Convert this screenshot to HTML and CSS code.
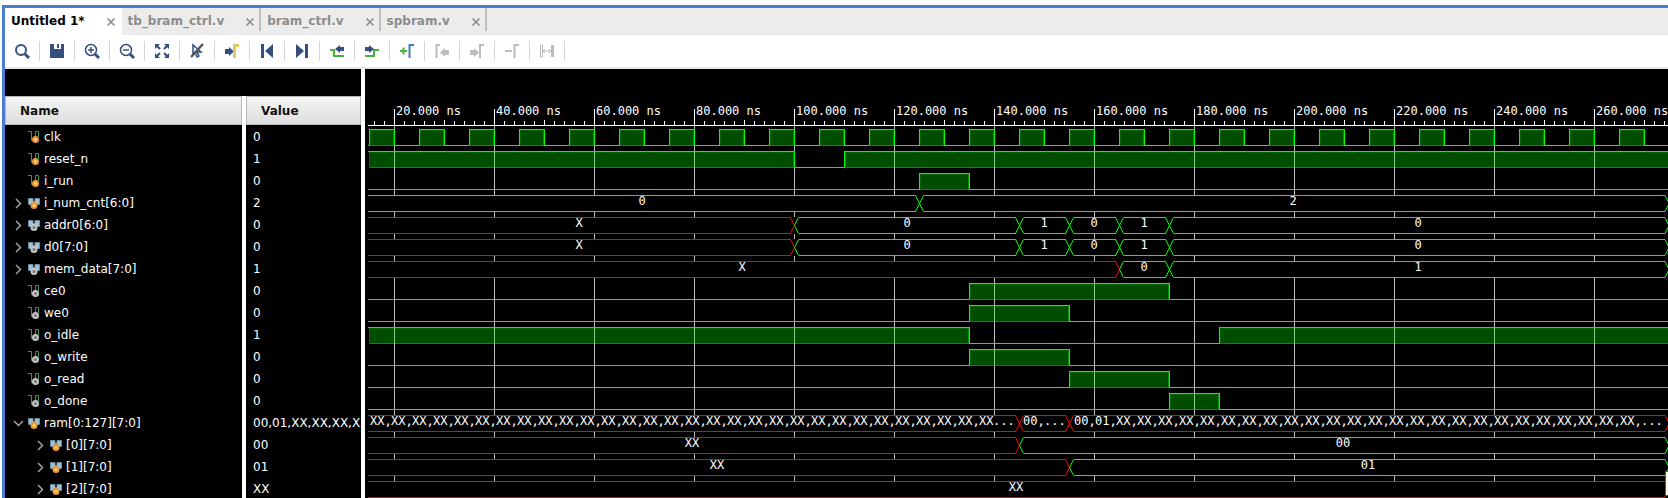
FILE: index.html
```html
<!DOCTYPE html>
<html lang="en">
<head>
<meta charset="utf-8">
<title>Waveform viewer</title>
<link rel="stylesheet" href="styles.css">
</head>
<body>
<svg class="defs" aria-hidden="true">
  <symbol id="net" viewBox="0 0 12 12">
    <path d="M0 .5H3.500V9.500H7.500V.5H10.500V6" fill="none" stroke="#3b9a50"/>
  </symbol>
  <symbol id="bus" viewBox="0 0 12 12">
    <path d="M.5 1.500H5V7.500H.5zM7 1.500h4.500v6H7z" fill="#9cc3d8" stroke="#6d8c9c"/>
    <path d="M4 3l2 2 2-2v4H4z" fill="#9cc3d8"/>
  </symbol>
  <symbol id="close" viewBox="0 0 8 8"><path d="M.5.5l7 7M7.500.5l-7 7" stroke="#8a8a8a" stroke-width="1.500"/></symbol>
</svg>
<main class="window">
  <nav class="tabs">
    <div class="tab active"><button class="label">Untitled 1*</button><button class="close" aria-label="Close Untitled 1"><svg><use href="#close"/></svg></button></div>
    <div class="tab"><button class="label">tb_bram_ctrl.v</button><button class="close" aria-label="Close tb_bram_ctrl.v"><svg><use href="#close"/></svg></button></div>
    <div class="tab"><button class="label">bram_ctrl.v</button><button class="close" aria-label="Close bram_ctrl.v"><svg><use href="#close"/></svg></button></div>
    <div class="tab"><button class="label">spbram.v</button><button class="close" aria-label="Close spbram.v"><svg><use href="#close"/></svg></button></div>
  </nav>
  <div class="toolbar">
    <button aria-label="Find"><svg viewBox="0 0 16 16"><circle cx="7" cy="7" r="5" class="l2"/><path d="M11 11l4 4" class="l3"/></svg></button>
    <button aria-label="Save"><svg viewBox="0 0 16 16"><path d="M1 1h4v5h7V1h3v14H1z" class="f"/><path d="M8 1h2v4H8z" class="f"/></svg></button>
    <button aria-label="Zoom in"><svg viewBox="0 0 16 16"><circle cx="7" cy="7" r="5.500" class="l1"/><path d="M11 11l4 4" class="l3"/><path d="M4 7h6M7 4v6" class="l1"/></svg></button>
    <button aria-label="Zoom out"><svg viewBox="0 0 16 16"><circle cx="7" cy="7" r="5.500" class="l1"/><path d="M11 11l4 4" class="l3"/><path d="M4 7h6" class="l1"/></svg></button>
    <button aria-label="Zoom fit"><svg viewBox="0 0 16 16"><path d="M1 1h5L1 6zM15 1v5l-5-5zM1 15v-5l5 5zM15 15h-5l5-5z" class="f"/><path d="M3 3l3 3M13 3l-3 3M3 13l3-3M13 13l-3-3" class="l2"/></svg></button>
    <button aria-label="Cancel selection"><svg viewBox="0 0 16 16"><path d="M4 2v9l2-2 2 5 2-1-2-4h4z" fill="none" stroke="#344f80" stroke-width="1.500"/><path d="M2 14L14 1" stroke="#555" stroke-width="2.500"/></svg></button>
    <button aria-label="Go to cursor"><svg viewBox="0 0 16 16"><path d="M1 6h4V4l5 4.500L5 13v-2H1z" class="f"/><path d="M10.500 15V2.500H15" fill="none" stroke="#e3c866" stroke-width="3"/></svg></button>
    <button aria-label="Go to start"><svg viewBox="0 0 16 16"><path d="M2 1h3v14H2zM14 1v14L6 8z" class="f"/></svg></button>
    <button aria-label="Go to end"><svg viewBox="0 0 16 16"><path d="M11 1h3v14h-3zM2 1v14l8-7z" class="f"/></svg></button>
    <button aria-label="Previous transition"><svg viewBox="0 0 16 16"><path d="M1 7h4v6h10" fill="none" stroke="#45b63b" stroke-width="2"/><path d="M15 4h-4V2L6 6l5 4V8h4z" class="f"/></svg></button>
    <button aria-label="Next transition"><svg viewBox="0 0 16 16"><path d="M1 13h9V7h5" fill="none" stroke="#45b63b" stroke-width="2"/><path d="M1 4h4V2l5 4-5 4V8H1z" class="f"/></svg></button>
    <button aria-label="Add marker"><svg viewBox="0 0 16 16"><path d="M1 8h7M4.500 4.500v7" stroke="#45b63b" stroke-width="2"/><path d="M10.500 15V2H15" fill="none" stroke="#3c83b5" stroke-width="2"/></svg></button>
    <button aria-label="Previous marker" disabled><svg viewBox="0 0 16 16"><path d="M2.500 15V2H6" fill="none" stroke="#bdbdbd" stroke-width="2"/><path d="M15 7h-4V5L6 9.500l5 4.500v-2h4z" fill="#bdbdbd"/></svg></button>
    <button aria-label="Next marker" disabled><svg viewBox="0 0 16 16"><path d="M11 15V2h4" fill="none" stroke="#bdbdbd" stroke-width="2"/><path d="M1 7h4V5l5 4.500L5 14v-2H1z" fill="#bdbdbd"/></svg></button>
    <button aria-label="Delete marker" disabled><svg viewBox="0 0 16 16"><path d="M1 8h7M10.500 15V2H15" fill="none" stroke="#bdbdbd" stroke-width="2"/></svg></button>
    <button aria-label="Swap markers" disabled><svg viewBox="0 0 16 16"><path d="M1.500 2h2v12h-2zM4 8h8M6 6L4 8l2 2M10 6l2 2-2 2" fill="none" stroke="#bdbdbd"/><path d="M12 2h3v12h-3z" fill="#bdbdbd"/></svg></button>
  </div>
  <div class="viewer">
    <section class="signals">
      <table>
        <colgroup><col class="col-name"><col class="col-value"></colgroup>
        <thead><tr><th scope="col">Name</th><th scope="col">Value</th></tr></thead>
        <tbody id="rows"></tbody>
      </table>
    </section>
    <section class="waves" id="waves"></section>
  </div>
  <div class="hint"></div>
</main>
<script src="script.js"></script>
</body>
</html>
```

FILE: styles.css
```css
* { box-sizing: border-box; }
body {
  margin: 0;
  height: 100vh;
  padding: 5px 0 0 2px;
  background: #fff;
  overflow: hidden;
  font: 12px/20px "DejaVu Sans", sans-serif;
}
button { border: 0; padding: 0; background: none; font: inherit; color: inherit; }
svg { display: block; }
.defs { position: absolute; width: 0; height: 0; }

.window {
  position: relative;
  display: flex;
  flex-direction: column;
  height: 100%;
  border: solid #4a7ccf;
  border-width: 3px 0 0 3px;
  overflow: hidden;
}

.tabs { display: flex; flex: none; height: 27px; background: #ececec; font-weight: bold; color: #8c8c8c; }
.tab { position: relative; display: flex; align-items: center; gap: 22px; padding: 0 7px 2px 6px; }
.tab:not(.active)::after {
  content: "";
  position: absolute;
  top: 0;
  right: 0;
  width: 2px;
  height: 23px;
  background: #bfbfbf;
}
.tab.active { background: #fff; color: #000; }
.close { padding-top: 3px; }
.close svg { width: 8px; height: 8px; }

.toolbar { display: flex; flex: none; align-items: center; height: 34px; border-bottom: 2px solid #e6e6e6; }
.toolbar button { display: flex; justify-content: center; align-items: center; width: 35px; height: 20px; border-right: 1px solid #d6d6d6; }
.toolbar svg { width: 16px; height: 16px; }
.f { fill: #344f80; }
.l1 { fill: none; stroke: #344f80; stroke-width: 1.5; }
.l2 { fill: none; stroke: #344f80; stroke-width: 2; }
.l3 { fill: none; stroke: #344f80; stroke-width: 3; }

.viewer { display: flex; flex: 1; min-height: 0; background: #000; color: #fff; }
.signals { flex: none; width: 360px; padding-top: 27px; border-right: 4px solid #fff; overflow: hidden; }
table { width: 356px; table-layout: fixed; border-spacing: 0; }
.col-name { width: 241px; }
td { padding: 2px 0 0; height: 22px; }
th:first-child, td:first-child { border-right: 4px solid #fff; }
th {
  height: 29px;
  padding: 0 0 0 15px;
  text-align: left;
  color: #111;
  background: linear-gradient(#f4f4f4, #dededf);
  box-shadow: inset 0 0 0 1px #b9b9b9;
}
td:last-child { padding-left: 7px; white-space: nowrap; overflow: hidden; }
.name { display: flex; align-items: center; gap: 4px; height: 20px; padding-left: 8px; white-space: nowrap; }
.name.child { padding-left: 30px; }
.toggle { width: 11px; height: 11px; flex: none; }
.toggle svg { width: 11px; height: 11px; fill: none; stroke: #a0a0a0; stroke-width: 1.5; }
.icon { width: 12px; height: 12px; overflow: visible; }

.waves { flex: 1; min-width: 0; overflow: hidden; }
.waves text { fill: #fff; font: 12px "DejaVu Sans Mono", monospace; white-space: pre; }
.waves text.mid { text-anchor: middle; }
.grid { stroke: #bebebe; }
.tick { stroke: #fff; }
.fill { fill: #0f0; fill-opacity: .3; stroke: #0f0; stroke-opacity: .4; }
.line { fill: none; stroke: #0f0; }
.bus-back { fill: #000; }
.bus { fill: none; stroke: #0f0; }
.bus.unknown { stroke: #f00; }
.cross { shape-rendering: geometricPrecision; }

.hint { position: absolute; right: 0; bottom: 2px; width: 3px; height: 25px; background: #ffffe1; border: solid #555; border-width: 1px 0 1px 1px; }
```

FILE: script.js
```js
const PX_PER_NS = 5;
const START_NS = 15;
const FIRST_X = 4.5;
const ROW = 22;
const RULER_Y = 56.5;
const CHAR = 7;

const clkEdges = [];
for (let t = 15; t < 600; t += 5) clkEdges.push(t);

// Scalar signals list their toggle times; buses list [start, text, unknown].
// An array of texts is a memory, one text for each word.
const signals = [
  { name: "clk", value: "0", kind: "in", edges: clkEdges },
  { name: "reset_n", value: "1", kind: "in", high: true, edges: [100, 110] },
  { name: "i_run", value: "0", kind: "in", edges: [125, 135] },
  { name: "i_num_cnt[6:0]", value: "2", kind: "in", bus: [[0, "0"], [125, "2"]] },
  { name: "addr0[6:0]", value: "0", kind: "out", bus: [[0, "X", 1], [100, "0"], [145, "1"], [155, "0"], [165, "1"], [175, "0"]] },
  { name: "d0[7:0]", value: "0", kind: "out", bus: [[0, "X", 1], [100, "0"], [145, "1"], [155, "0"], [165, "1"], [175, "0"]] },
  { name: "mem_data[7:0]", value: "1", kind: "out", bus: [[0, "X", 1], [165, "0"], [175, "1"]] },
  { name: "ce0", value: "0", kind: "out", edges: [135, 175] },
  { name: "we0", value: "0", kind: "out", edges: [135, 155] },
  { name: "o_idle", value: "1", kind: "out", high: true, edges: [135, 185] },
  { name: "o_write", value: "0", kind: "out", edges: [135, 155] },
  { name: "o_read", value: "0", kind: "out", edges: [155, 175] },
  { name: "o_done", value: "0", kind: "out", edges: [175, 185] },
  { name: "ram[0:127][7:0]", value: "00,01,XX,XX,XX,XX", kind: "in", open: true,
    bus: [
      [0, [...Array(29).fill("XX,"), "XX", "..."], 1],
      [145, ["00,", "..."], 1],
      [155, ["00,", "01,", ...Array(25).fill("XX,"), "..."], 1]
    ] },
  { name: "[0][7:0]", value: "00", kind: "in", child: true, bus: [[0, "XX", 1], [145, "00"]] },
  { name: "[1][7:0]", value: "01", kind: "in", child: true, bus: [[0, "XX", 1], [155, "01"]] },
  { name: "[2][7:0]", value: "XX", kind: "in", child: true, bus: [[0, "XX", 1]] }
];

function nameCell(s) {
  const chevron = s.open ? "M1 3l4.500 4.500L10 3" : "M3 1l4.500 4.500L3 10";
  const toggle = s.bus
    ? `<button class="toggle" aria-label="Toggle ${s.name}"><svg viewBox="0 0 11 11"><path d="${chevron}"/></svg></button>`
    : '<span class="toggle"></span>';
  const [cx, cy] = s.bus ? [6, 8.5] : [7.5, 8.5];
  const ball = s.kind === "in"
    ? `<circle cx="${cx}" cy="${cy}" r="3.500" fill="#ef962c"/><circle cx="${cx}" cy="${cy}" r="1.500" fill="#ffd38a"/>`
    : `<circle cx="${cx}" cy="${cy}" r="3.500" fill="#c4c4c4"/><circle cx="${cx}" cy="${cy}" r="1.500" fill="#777"/>`;
  return `<div class="name${s.child ? " child" : ""}">${toggle}` +
    `<svg class="icon" viewBox="0 0 12 12"><use href="#${s.bus ? "bus" : "net"}"/>${ball}</svg><span>${s.name}</span></div>`;
}

const xOf = t => FIRST_X + (t - START_NS) * PX_PER_NS;

function drawScalar(s, y, width) {
  const hi = y, lo = y + 16;
  let high = !!s.high, from = FIRST_X, fills = "";
  let d = `M3 ${high ? hi : lo}`;
  for (const t of s.edges) {
    const x = xOf(t);
    if (x > width + 50) break;
    d += `H${x}V${high ? lo : hi}`;
    if (high) fills += `<rect class="fill" x="${from}" y="${hi + 1}" width="${x - 1 - from}" height="15"/>`;
    high = !high;
    from = x + 1;
  }
  d += `H${width + 60}`;
  if (high) fills += `<rect class="fill" x="${from}" y="${hi + 1}" width="${width + 60 - from}" height="15"/>`;
  return fills + `<path class="line" d="${d}"/>`;
}

function label(text, mid, y) {
  if (!Array.isArray(text)) return `<text class="mid" x="${mid}" y="${y}">${text}</text>`;
  let x = mid - text.join("").length * CHAR / 2;
  return text.map(word => {
    const out = `<text x="${x}" y="${y}">${word}</text>`;
    x += word.length * CHAR;
    return out;
  }).join("");
}

function drawBus(s, y, width) {
  const bottom = y + 16;
  let out = `<rect class="bus-back" x="3" y="${y - 0.5}" width="${width}" height="17"/>`;
  s.bus.forEach(([t, text, unknown], i) => {
    const next = s.bus[i + 1];
    const a = i ? xOf(t) : 0;
    const b = next ? xOf(next[0]) : width + 1;
    const from = i ? a + 4 : 3;
    const cls = unknown ? "bus unknown" : "bus";
    let cross = `M${b - 4} ${y}L${b} ${y + 8}L${b - 4} ${bottom}`;
    if (i) cross += `M${a + 4} ${y}L${a} ${y + 8}L${a + 4} ${bottom}`;
    out += `<path class="${cls}" d="M${from} ${y}H${b - 4}M${from} ${bottom}H${b - 4}"/>`;
    out += `<path class="${cls} cross" d="${cross}"/>`;
    const mid = Math.floor((a + Math.min(b, width)) / 2);
    out += label(text, mid, y + 9.5);
  });
  return out;
}

function draw() {
  const pane = document.getElementById("waves");
  const width = pane.clientWidth, height = pane.clientHeight;
  let out = "";
  for (let t = 20; xOf(t) < width; t += 20) {
    const x = xOf(t);
    out += `<path class="grid" d="M${x} 57V${height}"/><text x="${x + 1.5}" y="46">${t}.000 ns</text>`;
  }
  out += `<path class="tick" d="M3 ${RULER_Y}H${width}"/>`;
  for (let t = 16; xOf(t) < width; t += 2) {
    const top = t % 20 === 0 ? 40 : t % 10 === 0 ? 51 : 52;
    out += `<path class="tick" d="M${xOf(t)} ${top}V57"/>`;
  }
  signals.forEach((s, i) => {
    const y = 60.5 + i * ROW;
    out += s.bus ? drawBus(s, y, width) : drawScalar(s, y, width);
  });
  pane.innerHTML = `<svg width="${width}" height="${height}" shape-rendering="crispEdges">${out}</svg>`;
}

document.getElementById("rows").innerHTML = signals
  .map(s => `<tr><td>${nameCell(s)}</td><td>${s.value}</td></tr>`)
  .join("");
draw();
addEventListener("resize", draw);
```
